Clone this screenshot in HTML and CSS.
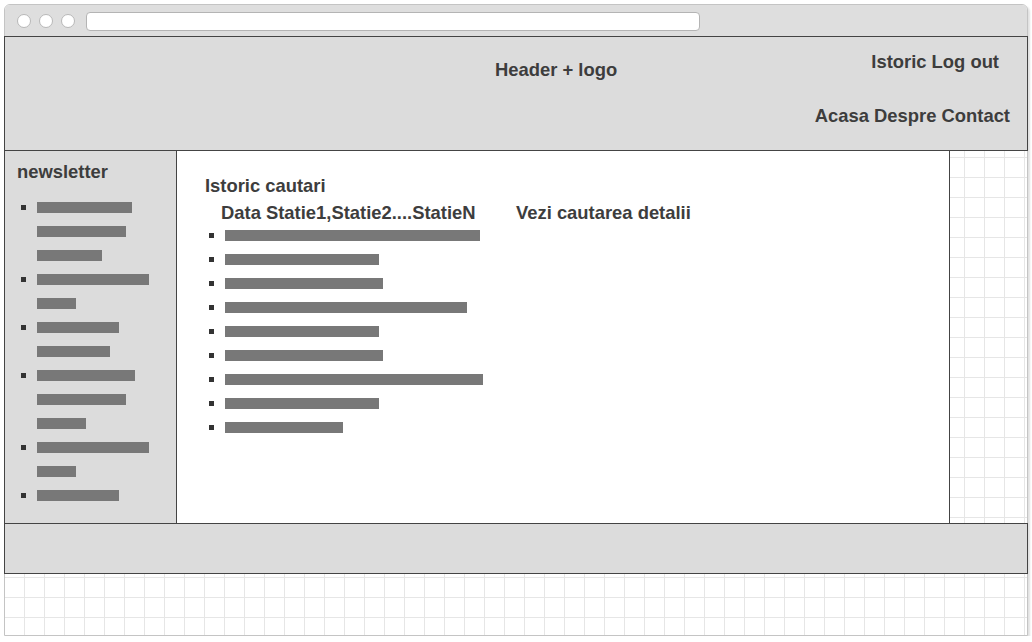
FILE: index.html
```html
<!DOCTYPE html>
<html lang="ro">
<head>
<meta charset="utf-8">
<title>Istoric cautari</title>
<link rel="stylesheet" href="styles.css">
</head>
<body>
<div class="window">
  <div class="chrome">
    <span class="btn"></span><span class="btn"></span><span class="btn"></span>
    <div class="address"></div>
  </div>
  <div class="page">
    <header class="header">
      <div class="logo">Header + logo</div>
      <nav class="nav">
        <div class="nav-top">Istoric Log out</div>
        <div class="nav-main">Acasa Despre Contact</div>
      </nav>
    </header>
    <div class="middle">
      <aside class="sidebar">
        <h2 class="side-title">newsletter</h2>
        <ul class="bars bars-side">
          <li><span class="dot"></span><div class="lines"><span class="bar" style="width:95px"></span><span class="bar" style="width:89px"></span><span class="bar" style="width:65px"></span></div></li>
          <li><span class="dot"></span><div class="lines"><span class="bar" style="width:112px"></span><span class="bar" style="width:39px"></span></div></li>
          <li><span class="dot"></span><div class="lines"><span class="bar" style="width:82px"></span><span class="bar" style="width:73px"></span></div></li>
          <li><span class="dot"></span><div class="lines"><span class="bar" style="width:98px"></span><span class="bar" style="width:89px"></span><span class="bar" style="width:49px"></span></div></li>
          <li><span class="dot"></span><div class="lines"><span class="bar" style="width:112px"></span><span class="bar" style="width:39px"></span></div></li>
          <li><span class="dot"></span><div class="lines"><span class="bar" style="width:82px"></span></div></li>
        </ul>
      </aside>
      <main class="content">
        <h2 class="content-title">Istoric cautari</h2>
        <div class="cols">
          <div class="col-list">
            <h3 class="list-title">Data Statie1,Statie2....StatieN</h3>
            <ul class="bars bars-main">
              <li><span class="dot"></span><div class="lines"><span class="bar" style="width:255px"></span></div></li>
              <li><span class="dot"></span><div class="lines"><span class="bar" style="width:154px"></span></div></li>
              <li><span class="dot"></span><div class="lines"><span class="bar" style="width:158px"></span></div></li>
              <li><span class="dot"></span><div class="lines"><span class="bar" style="width:242px"></span></div></li>
              <li><span class="dot"></span><div class="lines"><span class="bar" style="width:154px"></span></div></li>
              <li><span class="dot"></span><div class="lines"><span class="bar" style="width:158px"></span></div></li>
              <li><span class="dot"></span><div class="lines"><span class="bar" style="width:258px"></span></div></li>
              <li><span class="dot"></span><div class="lines"><span class="bar" style="width:154px"></span></div></li>
              <li><span class="dot"></span><div class="lines"><span class="bar" style="width:118px"></span></div></li>
            </ul>
          </div>
          <div class="col-detail">
            <h3 class="list-title detail-title">Vezi cautarea detalii</h3>
          </div>
        </div>
      </main>
    </div>
    <footer class="footer"></footer>
  </div>
</div>
</body>
</html>
```

FILE: styles.css
```css
* { box-sizing: border-box; }

html, body {
  margin: 0;
  padding: 0;
  background: #ffffff;
}

body {
  font-family: "Liberation Sans", Arial, sans-serif;
  font-weight: bold;
  font-size: 18.4px;
  color: #3d3d3d;
  padding: 4px 0 0 4px;
}

.window {
  width: 1024px;
  height: 632px;
  border: 1px solid #c4c4c4;
  border-radius: 6px 6px 0 0;
  box-shadow: 2px 2px 2px rgba(0, 0, 0, 0.12);
  display: flex;
  flex-direction: column;
  background: #ffffff;
}

.chrome {
  height: 31px;
  flex: none;
  background: #dedede;
  border-radius: 5px 5px 0 0;
  display: flex;
  align-items: center;
  padding-left: 12px;
  padding-top: 1px;
}

.btn {
  width: 14px;
  height: 14px;
  border-radius: 50%;
  background: #ffffff;
  border: 1px solid #b8b8b8;
  margin-right: 8px;
  flex: none;
}

.btn:nth-child(3) { margin-right: 11px; }

.address {
  width: 614px;
  height: 19px;
  background: #ffffff;
  border: 1px solid #b4b4b4;
  border-radius: 4px;
}

.page {
  flex: 1;
  display: flex;
  flex-direction: column;
  background-color: #ffffff;
  background-image:
    linear-gradient(to right, #e6e6e6 1px, transparent 1px),
    linear-gradient(to bottom, #e6e6e6 1px, transparent 1px);
  background-size: 20px 20px;
  background-position: 19px 1px;
}

.header {
  height: 115px;
  flex: none;
  margin: 0 -1px;
  border: 1px solid #444444;
  background: #dcdcdc;
  display: flex;
  align-items: flex-start;
}

.logo {
  margin-left: 490px;
  margin-top: 22px;
  line-height: 22px;
}

.nav {
  margin-left: auto;
  padding-right: 17px;
  text-align: right;
  line-height: 22px;
}

.nav-top {
  margin-top: 14px;
  padding-right: 11px;
}

.nav-main {
  margin-top: 32px;
}

.middle {
  height: 372px;
  flex: none;
  display: flex;
  margin-left: -1px;
}

.sidebar {
  width: 173px;
  border-left: 1px solid #444444;
  border-right: 1px solid #444444;
  background: #dcdcdc;
  padding: 10px 0 0 12px;
}

.side-title {
  margin: 0 0 12px;
  font-size: 18.4px;
  line-height: 22px;
}

.bars {
  list-style: none;
  margin: 0;
  padding: 0;
}

.bars li {
  display: flex;
  align-items: flex-start;
}

.dot {
  width: 5px;
  height: 5px;
  background: #333333;
  margin-top: 10px;
  margin-right: 11px;
  flex: none;
}

.lines {
  display: flex;
  flex-direction: column;
  align-items: flex-start;
}

.bar {
  display: block;
  height: 11px;
  margin: 7px 0 6px;
  background: #787878;
}

.bars-side {
  padding-left: 4px;
}

.content {
  width: 773px;
  border-right: 1px solid #444444;
  background: #ffffff;
  padding: 24px 0 0 28px;
}

.content-title {
  margin: 0 0 5px;
  font-size: 18.4px;
  line-height: 22px;
}

.cols {
  display: flex;
}

.col-list {
  width: 311px;
}

.list-title {
  margin: 0;
  font-size: 18.4px;
  line-height: 21px;
  padding-left: 16px;
}

.detail-title {
  padding-left: 0;
}

.bars-main {
  padding-left: 4px;
}

.footer {
  height: 51px;
  flex: none;
  margin: 0 -1px;
  border: 1px solid #444444;
  background: #dcdcdc;
}
```
